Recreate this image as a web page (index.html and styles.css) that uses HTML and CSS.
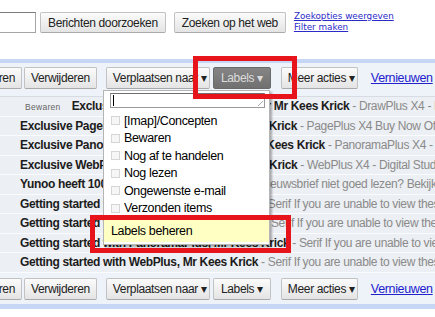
FILE: index.html
```html
<!DOCTYPE html>
<html lang="nl">
<head>
  <meta charset="UTF-8">
  <title>Labels beheren</title>
  <link rel="stylesheet" href="styles.css">
</head>
<body>
  <div class="page">
    <div class="search">
      <input type="text" class="search-box">
      <button class="btn">Berichten doorzoeken</button>
      <button class="btn web">Zoeken op het web</button>
      <div class="search-links">
        <a href="#">Zoekopties weergeven</a>
        <a href="#">Filter maken</a>
      </div>
    </div>

    <div class="toolbar top">
      <button class="btn clipped">Archiveren</button>
      <button class="btn">Verwijderen</button>
      <button class="btn move">Verplaatsen naar &#9662;</button>
      <button class="btn pressed">Labels &#9662;</button>
      <button class="btn more">Meer acties &#9662;</button>
      <a href="#" class="refresh">Vernieuwen</a>
    </div>

    <div class="rows">
      <div class="row first"><span class="tag">Bewaren</span><b>Exclusive DrawPlus X4 Offer Now for Mr Kees Krick</b><span class="snip"> - DrawPlus X4 - Digital Studio aanbieding</span></div>
      <div class="row"><b>Exclusive PagePlus X4 Offer Now for Mr Kees Krick</b><span class="snip"> - PagePlus X4 Buy Now Offer</span></div>
      <div class="row"><b>Exclusive PanoramaPlus X4 Offer Now for Mr Kees Krick</b><span class="snip"> - PanoramaPlus X4 - Digital</span></div>
      <div class="row"><b>Exclusive WebPlus X4 Offer Now! for Mr Kees Krick</b><span class="snip"> - WebPlus X4 - Digital Studio</span></div>
      <div class="row"><b>Yunoo heeft 100.000 leden bereikt</b><span class="snip"> - Kun je de nieuwsbrief niet goed lezen? Bekijk</span></div>
      <div class="row"><b>Getting started with WebPlus, Mr Kees Krick</b><span class="snip"> - Serif If you are unable to view these</span></div>
      <div class="row"><b>Getting started with PagePlus, Mr Kees Krick</b><span class="snip"> - Serif If you are unable to view these</span></div>
      <div class="row"><b>Getting started with PanoramaPlus, Mr Kees Krick</b><span class="snip"> - Serif If you are unable to view these</span></div>
      <div class="row"><b>Getting started with WebPlus, Mr Kees Krick</b><span class="snip"> - Serif If you are unable to view these</span></div>
    </div>

    <div class="toolbar bottom">
      <button class="btn clipped">Archiveren</button>
      <button class="btn">Verwijderen</button>
      <button class="btn move">Verplaatsen naar &#9662;</button>
      <button class="btn">Labels &#9662;</button>
      <button class="btn more">Meer acties &#9662;</button>
      <a href="#" class="refresh">Vernieuwen</a>
    </div>
  </div>

  <!-- labels menu, open under the Labels button -->
  <div class="menu">
    <div class="menu-input"><span class="caret"></span><span class="grip"></span></div>
    <ul class="menu-list">
      <li><span class="check"></span>[Imap]/Concepten</li>
      <li><span class="check"></span>Bewaren</li>
      <li><span class="check"></span>Nog af te handelen</li>
      <li><span class="check"></span>Nog lezen</li>
      <li><span class="check"></span>Ongewenste e-mail</li>
      <li><span class="check"></span>Verzonden items</li>
    </ul>
    <div class="menu-manage">Labels beheren</div>
  </div>

  <!-- red highlight boxes -->
  <div class="mark mark-labels"></div>
  <div class="mark mark-manage"></div>
</body>
</html>
```

FILE: styles.css
```css
* {
  margin: 0;
  padding: 0;
  box-sizing: border-box;
}

body {
  width: 435px;
  height: 317px;
  overflow: hidden;
  background: #fff;
  font-family: "Liberation Sans", Arial, sans-serif;
  font-size: 12px;
  letter-spacing: -0.35px;
  color: #000;
  position: relative;
}

/* Search bar */
.search {
  display: flex;
  align-items: center;
  height: 21px;
  margin-top: 12px;
}

.search-box {
  width: 38px;
  height: 21px;
  margin-left: -2px;
  border: 1px solid #a5a5a5;
  border-top-color: #7c7c7c;
}

.search .btn {
  margin-left: 4px;
  height: 21px;
  padding: 0 7px;
}

.search .web {
  margin-left: 8px;
}

.search-links {
  display: flex;
  flex-direction: column;
  margin-left: 8px;
  margin-top: -1px;
  line-height: 11px;
}

.search-links a {
  font-family: "DejaVu Sans", Verdana, sans-serif;
  font-size: 8.8px;
  letter-spacing: 0;
  color: #2a2ac8;
}

/* Buttons */
.btn {
  font-family: inherit;
  font-size: 12px;
  letter-spacing: -0.35px;
  color: #222;
  height: 22px;
  padding: 0 6px;
  border: 1px solid #c2c2c2;
  border-bottom-color: #a9a9a9;
  border-radius: 2px;
  background: linear-gradient(#fbfbfb, #e4e4e4);
  white-space: nowrap;
}

/* Toolbars */
.toolbar {
  display: flex;
  align-items: center;
  background: #eef2f9;
}

.toolbar.top {
  margin-top: 26px;
  border-top: 4px solid #c6d7f5;
  padding: 4px 0 7px;
}

.toolbar.bottom {
  padding: 5px 0 4px;
  border-bottom: 5px solid #c6d7f5;
}

.clipped {
  width: 80px;
  margin-left: -58px;
  text-align: right;
}

.toolbar .btn + .btn {
  margin-left: 2px;
}

.toolbar .move {
  margin-left: 9px !important;
  width: 104px;
}

.toolbar .pressed,
.toolbar .move + .btn {
  margin-left: 3px;
  width: 58px;
}

.pressed {
  background: linear-gradient(#858585, #707070);
  border-color: #6a6a6a;
  color: #dcdcdc;
}

.toolbar .more {
  margin-left: 10px !important;
  width: 77px;
}

.refresh {
  margin-left: 13px;
  color: #2222cc;
  font-size: 12.5px;
}

/* Message rows */
.rows {
  border-top: 1px solid #d6dbe4;
}

.row {
  height: 19.5px;
  line-height: 18px;
  padding-left: 20px;
  white-space: nowrap;
  overflow: hidden;
  background: #eceff3;
  border-bottom: 1.5px solid #fafbfc;
}

.row b {
  font-weight: bold;
  color: #1c1c1c;
}

.row.first {
  padding-left: 25px;
}

.tag {
  font-size: 8.5px;
  letter-spacing: 0.3px;
  color: #666;
  margin-right: 11px;
}

.snip {
  color: #8a8a8a;
}

/* Labels menu */
.menu {
  position: absolute;
  left: 103px;
  top: 90px;
  width: 167px;
  background: #fff;
  border: 1px solid #b5b5b5;
  box-shadow: 2px 2px 2px rgba(0, 0, 0, 0.3);
  padding-top: 2px;
  padding-bottom: 2px;
}

.menu-input {
  position: relative;
  height: 15px;
  margin: 0 4px 0 6px;
  border: 1px solid #9a9a9a;
  border-top-color: #6f6f6f;
}

.caret {
  position: absolute;
  left: 2px;
  top: 1px;
  width: 1px;
  height: 11px;
  background: #000;
}

.grip {
  position: absolute;
  right: 1px;
  bottom: 1px;
  width: 5px;
  height: 5px;
  background: linear-gradient(135deg, transparent 45%, #aaa 45%, #aaa 60%, transparent 60%);
}

.menu-list {
  list-style: none;
  margin-top: 4px;
}

.menu-list li {
  display: flex;
  align-items: center;
  height: 17.5px;
  padding-left: 7px;
  font-size: 12.5px;
}

.check {
  width: 9px;
  height: 9px;
  border: 1px solid #d6d6d6;
  background: #f6f6f6;
  margin-right: 4px;
}

.menu-manage {
  margin-top: 2px;
  border-top: 1px solid #d2d2d2;
  height: 23px;
  line-height: 23px;
  padding-left: 7px;
  background: #ffffc4;
  font-size: 12.5px;
}

/* Red annotation boxes */
.mark {
  position: absolute;
  border: 5px solid #e8141b;
}

.mark-labels {
  left: 193px;
  top: 56px;
  width: 104px;
  height: 43px;
}

.mark-manage {
  left: 90px;
  top: 215px;
  width: 201px;
  height: 38px;
}
```
